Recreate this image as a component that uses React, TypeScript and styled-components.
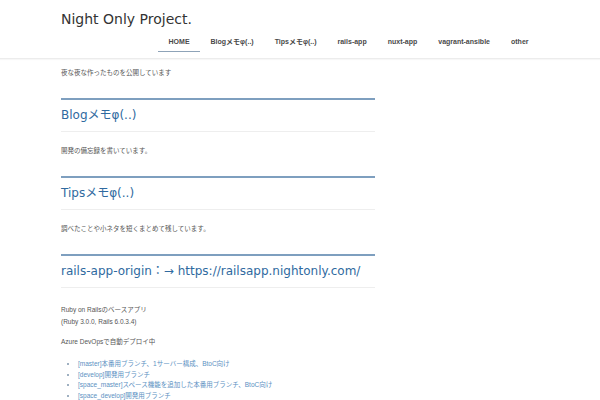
import React from 'react';
import styled, { createGlobalStyle } from 'styled-components';

const GlobalStyle = createGlobalStyle`
  html, body {
    margin: 0;
    padding: 0;
    background: #fff;
  }
  body {
    font-family: "DejaVu Sans", "Noto Sans CJK JP", sans-serif;
    color: #333;
  }
`;

const Container = styled.div`
  width: 478px;
  margin: 0 auto;
`;

const Header = styled.header`
  border-bottom: 1px solid #ececec;
  box-shadow: 0 1px 1px rgba(0, 0, 0, 0.03);
`;

const HeaderInner = styled(Container)`
  padding: 10px 0 6px;
`;

const SiteTitle = styled.h1`
  margin: 0;
  font-size: 14px;
  font-weight: normal;
  line-height: 18px;
  color: #333;
`;

const Nav = styled.ul`
  display: flex;
  justify-content: flex-end;
  list-style: none;
  margin: 0;
  padding: 0;
`;

const NavItem = styled.li<{ $active?: boolean }>`
  padding: 9px 10.5px 4px;
  font: bold 7px/10px "Liberation Sans", "Noto Sans CJK JP", sans-serif;
  color: #4a4a4a;
  white-space: nowrap;
  border-bottom: 1px solid ${p => (p.$active ? '#8ea3b8' : 'transparent')};
`;

const Main = styled(Container)`
  padding-top: 9px;
`;

const Column = styled.div`
  width: 314px;
`;

const Text = styled.p<{ $lh?: number; $mb?: number }>`
  margin: 0 0 ${p => p.$mb ?? 0}px;
  font: 6.5px / ${p => p.$lh ?? 10.7}px "Liberation Sans", "Noto Sans CJK JP", sans-serif;
  color: #555;
`;

const SectionTitle = styled.h2<{ $after?: number }>`
  margin: 19px 0 ${p => p.$after ?? 14.5}px;
  padding: 7px 0 8px;
  border-top: 2px solid #7e9fbf;
  border-bottom: 1px solid #eee;
  font-size: 12px;
  line-height: 16px;
  font-weight: normal;
  color: #2f6aa0;
  white-space: nowrap;
`;

const BranchList = styled.ul`
  margin: 0;
  padding-left: 17px;
  font: 6.5px/10.7px "Liberation Sans", "Noto Sans CJK JP", sans-serif;
  color: #5b90c2;
  li {
    height: 10.7px;
  }
  li::marker {
    color: #7f96ad;
  }
`;

const navItems = ['HOME', 'Blogメモφ(..)', 'Tipsメモφ(..)', 'rails-app', 'nuxt-app', 'vagrant-ansible', 'other'];

const branches = [
  '[master]本番用ブランチ、1サーバー構成、BtoC向け',
  '[develop]開発用ブランチ',
  '[space_master]スペース機能を追加した本番用ブランチ、BtoC向け',
  '[space_develop]開発用ブランチ',
];

const App = () => {
  return (
    <>
      <GlobalStyle />
      <Header>
        <HeaderInner>
          <SiteTitle>Night Only Project.</SiteTitle>
          <Nav>
            {navItems.map((item, i) => (
              <NavItem key={item} $active={i === 0}>{item}</NavItem>
            ))}
          </Nav>
        </HeaderInner>
      </Header>
      <Main>
        <Column>
          <Text>夜な夜な作ったものを公開しています</Text>

          <SectionTitle>Blogメモφ(..)</SectionTitle>
          <Text>開発の備忘録を書いています。</Text>

          <SectionTitle>Tipsメモφ(..)</SectionTitle>
          <Text>調べたことや小ネタを短くまとめて残しています。</Text>

          <SectionTitle $after={16}>rails-app-origin：→ https://railsapp.nightonly.com/</SectionTitle>
          <Text $lh={12} $mb={9}>
            Ruby on Railsのベースアプリ
            <br />
            (Ruby 3.0.0, Rails 6.0.3.4)
          </Text>
          <Text $mb={11}>Azure DevOpsで自動デプロイ中</Text>
          <BranchList>
            {branches.map(b => (
              <li key={b}>{b}</li>
            ))}
          </BranchList>
        </Column>
      </Main>
    </>
  );
};

export default App;
